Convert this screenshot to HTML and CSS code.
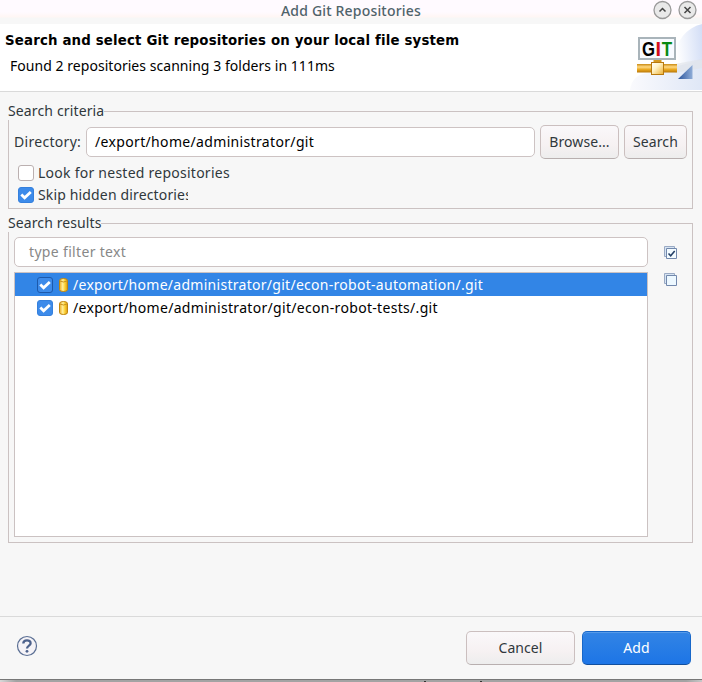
FILE: index.html
```html
<!DOCTYPE html>
<html lang="en">
<head>
<meta charset="utf-8">
<title>Add Git Repositories</title>
<link rel="stylesheet" href="styles.css">
</head>
<body>
<div class="dialog">
  <div class="titlebar">
    <span class="title">Add Git Repositories</span>
    <div class="window-buttons">
      <svg width="20" height="20" viewBox="0 0 20 20"><circle cx="10.500" cy="10" r="8.500" class="knob"/><path d="M7.500 11.500l3-3 3 3" class="glyph"/></svg>
      <svg width="20" height="20" viewBox="0 0 20 20"><circle cx="10.500" cy="10" r="8.500" class="knob"/><path d="M7.500 7l6 6M13.500 7l-6 6" class="glyph"/></svg>
    </div>
  </div>
  <header class="banner">
    <div class="banner-text">
      <h1>Search and select Git repositories on your local file system</h1>
      <p>Found 2 repositories scanning 3 folders in 111ms</p>
    </div>
    <svg class="banner-art" width="75" height="66" viewBox="0 0 75 66">
      <defs>
        <linearGradient id="sky" x1="0.15" y1="0.2" x2="1" y2="0.1"><stop offset="0.2" stop-color="#fff"/><stop offset="1" stop-color="#d3def6"/></linearGradient>
        <linearGradient id="floor" x1="0" y1="0" x2="1" y2="0"><stop offset="0" stop-color="#fafafd"/><stop offset="1" stop-color="#dfe7f6"/></linearGradient>
        <linearGradient id="pipe" x1="0" y1="0" x2="0" y2="1"><stop offset="0" stop-color="#c98a14"/><stop offset="0.35" stop-color="#ffd982"/><stop offset="0.65" stop-color="#eaa820"/><stop offset="1" stop-color="#b87708"/></linearGradient>
        <linearGradient id="box" x1="0" y1="0" x2="1" y2="1"><stop offset="0" stop-color="#fff"/><stop offset="0.4" stop-color="#fff3c8"/><stop offset="1" stop-color="#eeb030"/></linearGradient>
        <linearGradient id="tri" x1="0" y1="0" x2="1" y2="0"><stop offset="0" stop-color="#2c559c"/><stop offset="1" stop-color="#8fadd8"/></linearGradient>
      </defs>
      <path d="M75 0C59 4 50 16 46 34L35 50H75z" fill="url(#sky)"/>
      <path d="M3 66Q5 50 22 49L75 36V66z" fill="url(#floor)"/>
      <path d="M48 40L75 35V44L48 49z" fill="#e0e2e8" opacity="0.6"/>
      <rect x="12" y="14" width="36" height="21" fill="#f8fbff" stroke="#a9b4ba" stroke-width="2"/>
      <text y="31.500" class="git"><tspan x="15" textLength="13" lengthAdjust="spacingAndGlyphs" class="git-g">G</tspan><tspan x="28.600" class="git-i">I</tspan><tspan x="34.700" textLength="10.400" lengthAdjust="spacingAndGlyphs" class="git-t">T</tspan></text>
      <rect x="26.500" y="36" width="8" height="3" fill="#d69a20"/>
      <rect x="10" y="40" width="40" height="8.500" fill="url(#pipe)"/>
      <rect x="24.500" y="38.500" width="12" height="12" fill="url(#box)" stroke="#b9790d"/>
      <path d="M51 55L65.500 41V55z" fill="url(#tri)"/>
    </svg>
  </header>
  <main class="content">
    <fieldset class="criteria">
      <legend class="criteria-title">Search criteria</legend>
      <div class="directory">
        <label>Directory:</label>
        <div class="field path">/export/home/administrator/git</div>
        <button class="browse">Browse...</button>
        <button class="search">Search</button>
      </div>
      <div class="option"><span class="check"></span><span>Look for nested repositories</span></div>
      <div class="option"><span class="check on"><svg width="14" height="14" viewBox="0 0 14 14"><path d="M2.300 6.600l3.300 3.200L11.800 4"/></svg></span><span class="clip">Skip hidden directories</span></div>
    </fieldset>
    <fieldset class="results">
      <legend>Search results</legend>
      <div class="results-body">
        <div class="results-main">
          <div class="field filter">type filter text</div>
          <div class="list">
            <div class="row selected"><span class="check on"><svg width="14" height="14" viewBox="0 0 14 14"><path d="M2.300 6.600l3.300 3.200L11.800 4"/></svg></span><svg class="repo" width="10" height="14" viewBox="0 0 10 14"><use href="#cyl"/></svg><span>/export/home/administrator/git/econ-robot-automation/.git</span></div>
            <div class="row second"><span class="check on"><svg width="14" height="14" viewBox="0 0 14 14"><path d="M2.300 6.600l3.300 3.200L11.800 4"/></svg></span><svg class="repo" width="10" height="14" viewBox="0 0 10 14"><defs><linearGradient id="gold"><stop offset="0" stop-color="#eda91a"/><stop offset="0.4" stop-color="#fff0a0"/><stop offset="0.65" stop-color="#ffd53b"/><stop offset="1" stop-color="#d99a12"/></linearGradient><g id="cyl"><path d="M.5 2.500Q.5.500 4.500.500T8.500 2.500V11.500Q8.500 13.500 4.500 13.500T.5 11.500z" fill="url(#gold)" stroke="#bf850f"/><path d="M1 3Q4.500 5 8 3" fill="none" stroke="#c8921c"/></g></defs><use href="#cyl"/></svg><span>/export/home/administrator/git/econ-robot-tests/.git</span></div>
          </div>
        </div>
        <div class="tools">
          <svg width="14" height="14" viewBox="0 0 14 14"><path d="M.5.500h10v10h-10z" fill="#d7e4f2" stroke="#9aaac4"/><path d="M2.500 2.500h10v10h-10z" fill="#f3fbff" stroke="#7288ac"/><path d="M4.500 7.500l2.200 2.200 4-4.700" fill="none" stroke="#233f66" stroke-width="1.600"/></svg>
          <svg width="14" height="14" viewBox="0 0 14 14"><path d="M.5.500h10v10h-10z" fill="#d7e4f2" stroke="#9aaac4"/><path d="M2.500 2.500h10v10h-10z" fill="#edf8ff" stroke="#7288ac"/></svg>
        </div>
      </div>
    </fieldset>
  </main>
  <footer>
    <svg class="help" width="22" height="22" viewBox="0 0 22 22"><circle cx="11" cy="11" r="9.500" fill="#f5f3f7" stroke="#5b6f94" stroke-width="1.200"/><path d="M7.300 8.600C7.300 4.300 14.600 4.200 14.600 8.200C14.600 10.600 11 10.600 11 13.600" fill="none" stroke="#4d628c" stroke-width="2.300"/><circle cx="11" cy="16.300" r="1.400" fill="#4d628c"/></svg>
    <button class="cancel">Cancel</button>
    <button class="add">Add</button>
  </footer>
</div>
<div class="edge"><i></i><i></i></div>
</body>
</html>
```
FILE: styles.css
```css
* { box-sizing: border-box; }
body { margin: 0; width: 702px; height: 682px; overflow: hidden; background: #f7f7f7; color: #30383c; font: 14px/18px "Noto Sans", sans-serif; white-space: nowrap; }
.dialog { height: 679px; display: flex; flex-direction: column; }
.titlebar { height: 24px; display: grid; grid-template-columns: 1fr auto; background: linear-gradient(#fffaff 0, #fffaff 12px, #fff6f4 17px, #f7f7f7 18px); }
.title { padding-left: 281px; line-height: 21px; font-weight: 500; letter-spacing: 0.18px; color: #50636a; }
.window-buttons { display: flex; gap: 5px; padding-right: 5px; }
.knob { fill: #e9e9e9; stroke: #999; stroke-width: 1.3; }
.glyph { fill: none; stroke: #444; stroke-width: 1.5; }
.banner { height: 68px; display: flex; justify-content: space-between; background: #fff; border-bottom: 1px solid #dadada; color: #000; }
h1 { margin: 7px 0 0 5px; font: bold 13.33px/20px "DejaVu Sans", sans-serif; letter-spacing: 0.17px; }
p { margin: 6px 0 0 10px; letter-spacing: 0.04px; }
.banner-art { flex: none; }
.git { font: bold 20px "Liberation Sans", sans-serif; }
.git-g { fill: #000; }
.git-i { fill: #d3101c; }
.git-t { fill: #078a12; }
.content { flex: 1; padding: 10px 9px 0 8px; }
fieldset { margin: 0; padding: 0 5px; border: 1px solid #cbc2c2; min-width: 0; }
legend { margin-left: -6px; padding: 0; height: 18px; background: #f7f7f7; letter-spacing: 0.1px; }
.criteria-title { letter-spacing: 0.14px; }
.criteria { height: 107px; }
.results { height: 329px; margin-top: 5px; }
.directory { height: 34px; margin-top: 5px; display: flex; align-items: center; }
.directory label { width: 72px; letter-spacing: 0.3px; }
.field { height: 30px; display: flex; align-items: center; background: #fff; border: 1px solid #cdc3c3; border-radius: 5px; }
.path { width: 449px; padding-left: 8px; letter-spacing: 0.34px; color: #000; }
button { height: 34px; padding: 0; border: 1px solid #cbbfbf; border-bottom-color: #b8afaf; border-radius: 5px; background: linear-gradient(#faf8fa, #f6f1f2 60%, #ededed); color: inherit; font: inherit; letter-spacing: 0.08px; }
.browse { width: 79px; margin-left: 5px; }
.search { width: 63px; margin-left: 5px; }
.option { height: 22px; display: flex; align-items: center; margin-left: 4px; letter-spacing: 0.25px; }
.directory + .option { margin-top: 3px; }
.check { flex: none; width: 16px; height: 16px; border: 1px solid #bbb0b0; border-radius: 3px; background: #fff; margin-right: 4px; }
.check svg { display: block; }
.check path { fill: none; stroke: #fff; stroke-width: 2.8; }
.check.on { background: #3d8bea; border-color: #3580dd; }
.clip { width: 150px; overflow: hidden; letter-spacing: 0.15px; }
.results-body { display: flex; margin-top: 5px; }
.results-main { width: 634px; }
.filter { padding-left: 14px; letter-spacing: 0.33px; color: #888; }
.list { height: 265px; margin-top: 5px; background: #fff; border: 1px solid #cbc2c2; color: #000; }
.row { height: 23px; display: flex; align-items: center; padding-left: 22px; letter-spacing: 0.28px; }
.second { letter-spacing: 0.31px; }
.selected { background: #3285e6; color: #fff; }
.selected .check.on { border-color: #1c59ab; }
.repo { margin: 0 4px 0 2px; }
.tools { display: flex; flex-direction: column; gap: 13px; padding: 9px 0 0 16px; }
footer { height: 63px; border-top: 1px solid #dadada; display: flex; align-items: center; padding: 0 11px 1px 16px; }
.help { margin-right: auto; margin-bottom: 3px; }
.cancel, .add { width: 109px; }
.add { margin-left: 7px; color: #fff; border-color: #1767c9; border-bottom-color: #124f9d; background: linear-gradient(#3284e5, #1d75e6); box-shadow: inset 0 1px #579be9; }
.edge { height: 3px; display: flex; align-items: flex-end; gap: 54px; padding-left: 424px; border-top: 1px solid #777; background: linear-gradient(90deg, #d8d8d8, #a3a3a3 16px, #a3a3a3 686px, #c8c8c8); }
.edge i { width: 2px; height: 1px; background: #333; }
```
